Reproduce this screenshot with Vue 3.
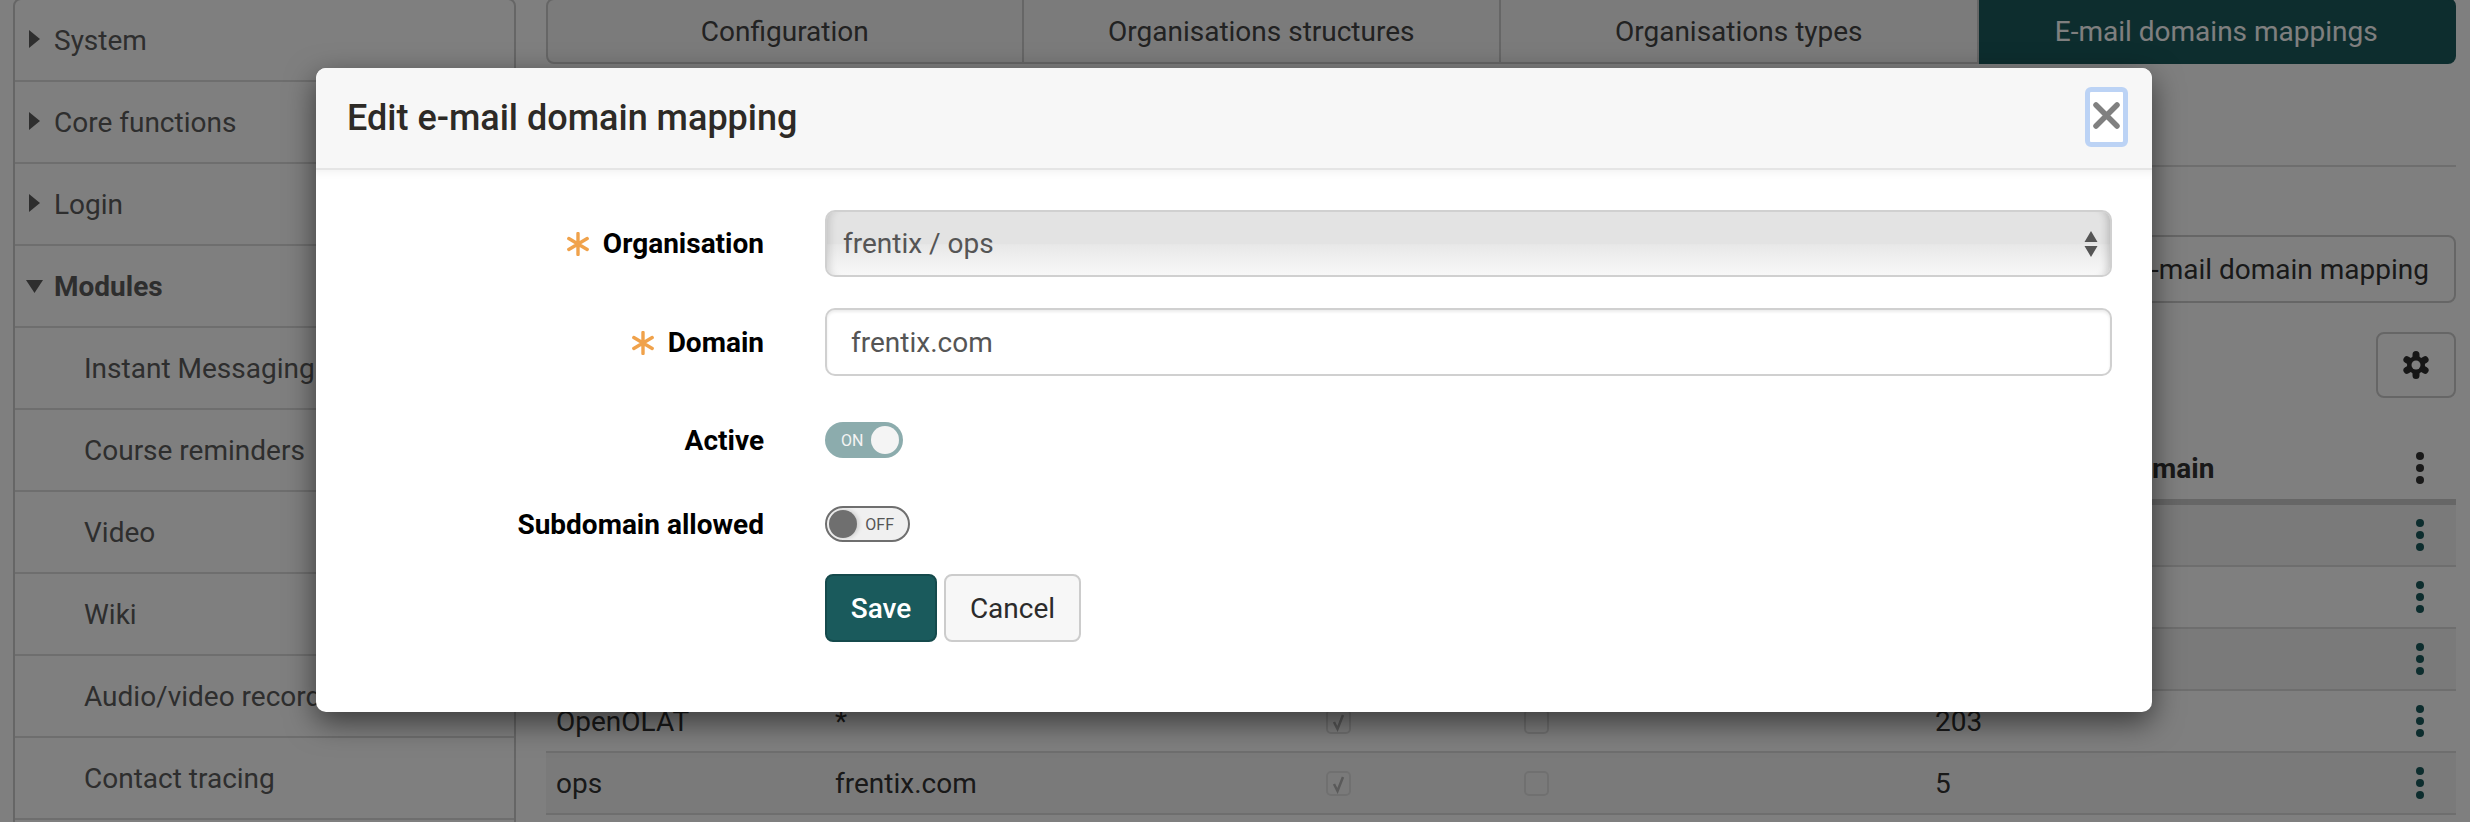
<script setup>
const sideItems = [
  { label: 'System', arrow: 'right' },
  { label: 'Core functions', arrow: 'right' },
  { label: 'Login', arrow: 'right' },
  { label: 'Modules', arrow: 'down', bold: true },
  { label: 'Instant Messaging', sub: true },
  { label: 'Course reminders', sub: true },
  { label: 'Video', sub: true },
  { label: 'Wiki', sub: true },
  { label: 'Audio/video recording', sub: true },
  { label: 'Contact tracing', sub: true },
  { label: '', sub: true }
]
const tabs = ['Configuration', 'Organisations structures', 'Organisations types', 'E-mail domains mappings']
const rows = [
  { name: '', domain: '', users: '', menu: true },
  { name: '', domain: '', users: '', menu: true },
  { name: '', domain: '', users: '', menu: true },
  { name: 'OpenOLAT', domain: '*', users: '203', menu: true, boxes: true },
  { name: 'ops', domain: 'frentix.com', users: '5', menu: true, boxes: true },
  { name: '', domain: '', users: '', menu: false }
]
</script>

<template>
  <div class="page">
    <aside class="side">
      <div v-for="(item, i) in sideItems" :key="i" class="side-row" :class="{ sub: item.sub, bold: item.bold }">
        <svg v-if="item.arrow === 'right'" class="tri-r" viewBox="0 0 11 18"><path d="M0 0l11 9-11 9z" /></svg>
        <svg v-if="item.arrow === 'down'" class="tri-d" viewBox="0 0 17 13"><path d="M0 0h17l-8.500 13z" /></svg>
        <span>{{ item.label }}</span>
      </div>
    </aside>
    <main class="main">
      <nav class="tabs">
        <div v-for="(t, i) in tabs" :key="t" class="tab" :class="{ active: i === 3 }">{{ t }}</div>
      </nav>
      <div class="rule"></div>
      <div class="add-row"><button class="btn add">Create e-mail domain mapping</button></div>
      <div class="tool-row">
        <button class="btn gear">
          <svg viewBox="0 0 26 28" width="26" height="28">
            <g stroke="#2d2d2d" stroke-width="7" stroke-linecap="round">
              <path d="M13 14V3.500M13 14v10.500M13 14L3.900 8.750M13 14l9.100-5.250M13 14L3.900 19.250M13 14l9.100 5.250" />
            </g>
            <circle cx="13" cy="14" r="9" fill="#2d2d2d" />
            <circle cx="13" cy="14" r="4.500" fill="#fff" />
          </svg>
        </button>
      </div>
      <div class="table">
        <div class="thead">
          <div></div><div></div><div></div><div></div><div class="th-users">Users for this domain</div>
          <div class="dots dark"><i></i><i></i><i></i></div>
        </div>
        <div v-for="(r, i) in rows" :key="i" class="trow">
          <div>{{ r.name }}</div>
          <div>{{ r.domain }}</div>
          <div><span v-if="r.boxes" class="cb first"><svg viewBox="0 0 20 20" width="20" height="20"><path d="M5 10l3.500 7L14 3" fill="none" stroke="#b4b4b4" stroke-width="2.500" /></svg></span></div>
          <div><span v-if="r.boxes" class="cb"></span></div>
          <div>{{ r.users }}</div>
          <div class="dots" v-if="r.menu"><i></i><i></i><i></i></div>
        </div>
      </div>
    </main>

    <div class="backdrop">
      <section class="modal">
        <header class="m-head">
          <h4>Edit e-mail domain mapping</h4>
          <button class="close" aria-label="Close">
            <svg viewBox="0 0 27 27" width="27" height="27"><path d="M3 3l21 21M24 3L3 24" stroke="#808080" stroke-width="5.500" stroke-linecap="round" fill="none" /></svg>
          </button>
        </header>
        <div class="m-body">
          <div class="f-row r-org">
            <label>
              <svg class="req" viewBox="0 0 22 24" width="22" height="24"><path d="M11 1.500v21M1.800 6.500l18.400 11M20.200 6.500L1.800 17.500" stroke="#f0a24b" stroke-width="3.400" stroke-linecap="round" fill="none" /></svg>Organisation
            </label>
            <div class="select">
              <span>frentix / ops</span>
              <svg viewBox="0 0 14 26" width="14" height="26"><path fill="#555" d="M7 0l6.500 11H.5zM.5 15h13L7 26z" /></svg>
            </div>
          </div>
          <div class="f-row r-dom">
            <label>
              <svg class="req" viewBox="0 0 22 24" width="22" height="24"><path d="M11 1.500v21M1.800 6.500l18.400 11M20.200 6.500L1.800 17.500" stroke="#f0a24b" stroke-width="3.400" stroke-linecap="round" fill="none" /></svg>Domain
            </label>
            <div class="input">frentix.com</div>
          </div>
          <div class="f-row r-act">
            <label>Active</label>
            <div class="toggle on"><span class="tx">ON</span><span class="knob"></span></div>
          </div>
          <div class="f-row r-sub">
            <label>Subdomain allowed</label>
            <div class="toggle off"><span class="knob"></span><span class="tx">OFF</span></div>
          </div>
          <div class="f-row r-btn">
            <label></label>
            <div class="actions">
              <button class="b save">Save</button>
              <button class="b cancel">Cancel</button>
            </div>
          </div>
        </div>
      </section>
    </div>
  </div>
</template>

<style>
html, body { margin: 0; height: 100%; overflow: hidden; background: #fff; }
</style>

<style scoped>
.page {
  position: relative; width: 2470px; height: 822px; overflow: hidden;
  font-family: Roboto, "Liberation Sans", sans-serif; font-size: 28px; color: #333;
  display: flex; align-items: flex-start; box-sizing: border-box; padding: 0 14px 0 13px;
}
.side { width: 503px; margin-top: -2px; border: 2px solid #ccc; border-radius: 8px; box-sizing: border-box; flex: none; }
.side-row { height: 82px; border-bottom: 2px solid #ddd; box-sizing: border-box; display: flex; align-items: center; color: #5c5c5c; padding-left: 39px; position: relative; font-size: 28px; }
.side-row.sub { padding-left: 69px; }
.side-row.bold { font-weight: 700; }
.tri-r { position: absolute; left: 14px; top: 30px; width: 11px; height: 18px; fill: #5c5c5c; }
.tri-d { position: absolute; left: 11px; top: 34px; width: 17px; height: 13px; fill: #5c5c5c; }
.main { margin-left: 30px; flex: 1; min-width: 0; }
.tabs { display: grid; grid-template-columns: repeat(4, 1fr); margin-top: -2px; height: 66px; }
.tab { display: flex; align-items: center; justify-content: center; background: #f7f7f7; border: 2px solid #ccc; border-left-width: 0; box-sizing: border-box; color: #444; }
.tab:first-child { border-left-width: 2px; border-radius: 8px 0 0 8px; }
.tab.active { background: #1a5a5c; border-color: #1a5a5c; color: #fff; border-radius: 0 8px 8px 0; }
.rule { height: 2px; background: #ddd; margin-top: 101px; }
.add-row { display: flex; justify-content: flex-end; margin-top: 68px; }
.btn { background: #fff; border: 2px solid #ccc; border-radius: 8px; font: inherit; color: #333; box-sizing: border-box; padding: 0; }
.add { height: 68px; padding: 0 25px; }
.tool-row { display: flex; justify-content: flex-end; margin-top: 29px; }
.gear { width: 80px; height: 66px; display: flex; align-items: center; justify-content: center; }
.table { margin-top: 34px; }
.thead, .trow { display: grid; grid-template-columns: 279px 493px 196px 411px 481px 1fr; align-items: center; box-sizing: border-box; padding-left: 10px; }
.thead { height: 73px; border-bottom: 6px solid #ccc; font-weight: 700; padding-top: 5px; white-space: nowrap; }
.th-users { padding-left: 9px; }
.trow { height: 62px; border-bottom: 2px solid #ddd; }
.trow:nth-child(even) { background: #f5f5f5; }
.cb { display: flex; align-items: center; justify-content: center; width: 25px; height: 25px; border: 2px solid #e0e0e0; border-radius: 5px; box-sizing: border-box; margin-top: 1px; }
.cb.first { margin-left: -2px; }
.dots { display: flex; flex-direction: column; align-items: center; gap: 4px; width: 8px; }
.dots i { width: 8px; height: 8px; border-radius: 50%; background: #1a5a5c; display: block; }
.dots.dark i { background: #333; }

.backdrop { position: absolute; inset: 0; background: rgba(0, 0, 0, .5); }
.modal { position: absolute; left: 316px; top: 68px; width: 1836px; height: 644px; background: #fff; border-radius: 10px; box-shadow: 0 10px 30px rgba(0, 0, 0, .55); }
.m-head { height: 102px; background: #f7f7f7; border-bottom: 2px solid #e5e5e5; border-radius: 10px 10px 0 0; box-sizing: border-box; display: flex; align-items: center; justify-content: space-between; padding: 0 24px 0 31px; }
.m-head h4 { margin: 0; font-size: 36px; font-weight: 500; color: #2d2a26; }
.close { width: 43px; height: 60px; margin-top: -2px; padding: 0; background: #fff; border: 5px solid #bcd3f5; border-radius: 6px; box-sizing: border-box; display: flex; align-items: flex-start; justify-content: center; }
.close svg { margin-top: 10px; }
.m-body { padding-top: 40px; box-shadow: inset 0 12px 12px -12px rgba(0, 0, 0, .08); }
.f-row { display: flex; align-items: center; color: #000; }
.f-row label { width: 448px; text-align: right; font-weight: 700; margin-right: 61px; flex: none; }
.req { margin-right: 14px; vertical-align: -3px; }
.r-dom { margin-top: 31px; }
.r-act { margin-top: 46px; }
.r-sub { margin-top: 48px; }
.r-btn { margin-top: 32px; }
.select, .input { width: 1287px; height: 68px; box-sizing: border-box; border: 2px solid #d0d0d0; border-radius: 10px; display: flex; align-items: center; color: #555; }
.select { height: 67px; justify-content: space-between; padding: 0 12px 0 16px; background: linear-gradient(#e3e3e3 0, #e3e3e3 50%, #e8e8e8 52%, #f8f8f8 100%); box-shadow: inset 10px 0 8px -8px rgba(0,0,0,.15), inset -10px 0 8px -8px rgba(0,0,0,.2); }
.input { padding-left: 24px; box-shadow: inset 0 2px 3px rgba(0,0,0,.08); }
.toggle { height: 36px; border-radius: 18px; box-sizing: border-box; display: flex; align-items: center; font-size: 16px; }
.toggle.on { width: 78px; background: #8cacad; color: #f4f4f4; padding: 0 4px 0 16px; justify-content: space-between; }
.toggle.on .knob { width: 28px; height: 28px; border-radius: 50%; background: #f4f4f4; }
.toggle.off { width: 85px; background: #f0f0f0; border: 2px solid #6f6f6f; color: #555; padding: 0 14px 0 2px; justify-content: space-between; }
.toggle.off .knob { width: 28px; height: 28px; border-radius: 50%; background: #6f6f6f; box-shadow: 2px 0 4px rgba(0,0,0,.15); }
.actions { display: flex; gap: 7px; }
.b { height: 68px; border-radius: 8px; font: inherit; padding: 0; box-sizing: border-box; }
.save { width: 112px; background: #1a5a5c; border: 2px solid #154a4c; color: #fff; font-weight: 500; }
.cancel { width: 137px; background: #f7f7f7; border: 2px solid #ccc; color: #2b2b2b; }
</style>
